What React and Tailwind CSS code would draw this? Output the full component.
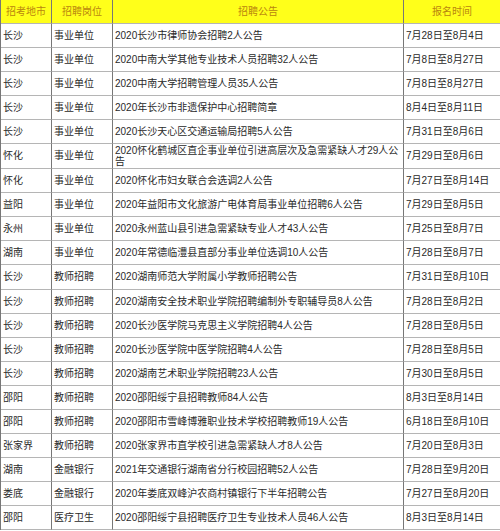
const rows = [
  ['长沙', '事业单位', '2020长沙市律师协会招聘2人公告', '7月28日至8月4日'],
  ['长沙', '事业单位', '2020中南大学其他专业技术人员招聘32人公告', '7月8日至8月27日'],
  ['长沙', '事业单位', '2020中南大学招聘管理人员35人公告', '7月8日至8月27日'],
  ['长沙', '事业单位', '2020年长沙市非遗保护中心招聘简章', '8月4日至8月11日'],
  ['长沙', '事业单位', '2020长沙天心区交通运输局招聘5人公告', '7月31日至8月6日'],
  ['怀化', '事业单位', ['2020怀化鹤城区直企事业单位引进高层次及急需紧缺人才29人公', '告'], '7月29日至8月6日'],
  ['怀化', '事业单位', '2020怀化市妇女联合会选调2人公告', '7月27日至8月14日'],
  ['益阳', '事业单位', '2020年益阳市文化旅游广电体育局事业单位招聘6人公告', '7月29日至8月5日'],
  ['永州', '事业单位', '2020永州蓝山县引进急需紧缺专业人才43人公告', '7月25日至8月7日'],
  ['湖南', '事业单位', '2020年常德临澧县直部分事业单位选调10人公告', '7月28日至8月7日'],
  ['长沙', '教师招聘', '2020湖南师范大学附属小学教师招聘公告', '7月31日至8月10日'],
  ['长沙', '教师招聘', '2020湖南安全技术职业学院招聘编制外专职辅导员8人公告', '7月28日至8月2日'],
  ['长沙', '教师招聘', '2020长沙医学院马克思主义学院招聘4人公告', '7月28日至8月5日'],
  ['长沙', '教师招聘', '2020长沙医学院中医学院招聘4人公告', '7月28日至8月5日'],
  ['长沙', '教师招聘', '2020湖南艺术职业学院招聘23人公告', '7月30日至8月5日'],
  ['邵阳', '教师招聘', '2020邵阳绥宁县招聘教师84人公告', '8月3日至8月14日'],
  ['邵阳', '教师招聘', '2020邵阳市雪峰博雅职业技术学校招聘教师19人公告', '6月18日至8月10日'],
  ['张家界', '教师招聘', '2020张家界市直学校引进急需紧缺人才8人公告', '7月20日至8月3日'],
  ['湖南', '金融银行', '2021年交通银行湖南省分行校园招聘52人公告', '7月28日至9月20日'],
  ['娄底', '金融银行', '2020年娄底双峰沪农商村镇银行下半年招聘公告', '7月27日至8月20日'],
  ['邵阳', '医疗卫生', '2020邵阳绥宁县招聘医疗卫生专业技术人员46人公告', '8月3日至8月14日'],
]

// 行高：第6行和第11行略高
const tall = [5, 10]

const cell = 'border-r border-b border-r-[#777] border-b-[#b5b5b5] flex items-center overflow-hidden whitespace-nowrap'

export default function App() {
  return (
    <div
      className="w-[500px] h-[531px] bg-white text-[#2a2a2a] text-[10px] leading-[12px]"
      style={{ fontFamily: '"Liberation Sans", "Noto Sans CJK SC", sans-serif' }}
    >
      <div className="grid grid-cols-[51px_61px_291px_97px] border-l border-[#777]">
        {/* 表头 */}
        {['招考地市', '招聘岗位', '招聘公告', '报名时间'].map((h) => (
          <div key={h} className={`${cell} h-[24px] justify-center bg-[#ffff1a] text-[#b9860f]`}>
            {h}
          </div>
        ))}

        {rows.map((r, i) => {
          const h = tall.includes(i) ? 'h-[25px]' : 'h-[24px]'
          return [
            <div key={i + 'a'} className={`${cell} ${h} pl-[2px]`}>{r[0]}</div>,
            <div key={i + 'b'} className={`${cell} ${h} pl-[2px]`}>{r[1]}</div>,
            <div key={i + 'c'} className={`${cell} ${h} pl-[2px]`}>
              {Array.isArray(r[2]) ? (
                <div className="flex flex-col leading-[11px]">
                  <span>{r[2][0]}</span>
                  <span>{r[2][1]}</span>
                </div>
              ) : (
                r[2]
              )}
            </div>,
            <div key={i + 'd'} className={`${cell} ${h} pl-[2px]`}>{r[3]}</div>,
          ]
        })}
      </div>
    </div>
  )
}
